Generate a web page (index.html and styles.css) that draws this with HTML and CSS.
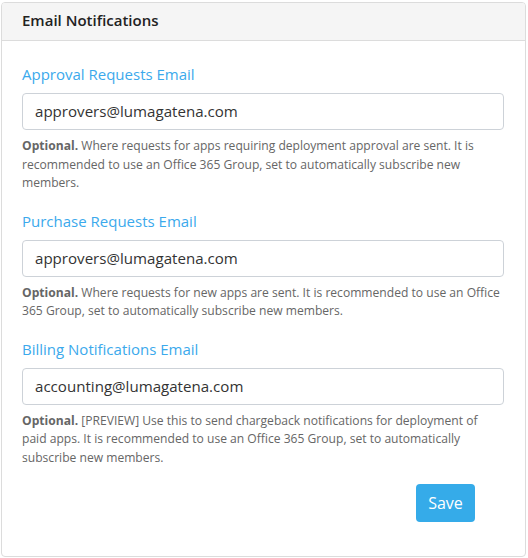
FILE: index.html
```html
<!DOCTYPE html>
<html>
<head>
<meta charset="utf-8">
<link rel="stylesheet" href="styles.css">
</head>
<body>
<div class="card">
  <div class="card-header">Email Notifications</div>
  <div class="card-body">
    <div class="field">
      <label class="label">Approval Requests Email</label>
      <div class="input">approvers@lumagatena.com</div>
      <p class="help"><b>Optional.</b> Where requests for apps requiring deployment approval are sent. It is recommended to use an Office 365 Group, set to automatically subscribe new members.</p>
    </div>
    <div class="field">
      <label class="label">Purchase Requests Email</label>
      <div class="input">approvers@lumagatena.com</div>
      <p class="help"><b>Optional.</b> Where requests for new apps are sent. It is recommended to use an Office 365 Group, set to automatically subscribe new members.</p>
    </div>
    <div class="field">
      <label class="label">Billing Notifications Email</label>
      <div class="input">accounting@lumagatena.com</div>
      <p class="help"><b>Optional.</b> [PREVIEW] Use this to send chargeback notifications for deployment of paid apps. It is recommended to use an Office 365 Group, set to automatically subscribe new members.</p>
    </div>
    <div class="actions">
      <button class="btn">Save</button>
    </div>
  </div>
</div>
</body>
</html>
```
FILE: styles.css
```css
html, body {
  margin: 0;
  padding: 0;
  background: #fff;
}
body {
  padding: 2px 2px 1px 1px;
  font-family: "Open Sans", "Noto Sans", sans-serif;
  color: #333;
}
.card {
  border: 1px solid #dcdcdc;
  border-radius: 4px;
  height: 555px;
  box-sizing: border-box;
  overflow: hidden;
}
.card-header {
  background: #f5f5f5;
  border-bottom: 1px solid #dcdcdc;
  height: 38px;
  box-sizing: border-box;
  padding: 7px 20px 0;
  font-size: 15px;
  font-weight: 600;
  color: #222;
}
.card-body {
  padding: 22px 21px 0 20px;
}
.field {
  margin-bottom: 17px;
}
.label {
  display: block;
  color: #3ba9ec;
  font-size: 15px;
  line-height: 22px;
  margin-bottom: 8px;
}
.input {
  height: 37px;
  box-sizing: border-box;
  border: 1px solid #cdd2d8;
  border-radius: 4px;
  padding: 0 12px;
  font-size: 15.1px;
  line-height: 35px;
  color: #333;
}
.help {
  margin: 7px 0 0;
  font-size: 12.1px;
  line-height: 18.5px;
  color: #666;
}
.help b {
  font-weight: 700;
}
.actions {
  display: flex;
  justify-content: flex-end;
  padding-right: 29px;
}
.btn {
  width: 59px;
  height: 38px;
  border: none;
  border-radius: 4px;
  background: #35abe9;
  color: #fff;
  font-family: inherit;
  font-size: 16px;
}
```
